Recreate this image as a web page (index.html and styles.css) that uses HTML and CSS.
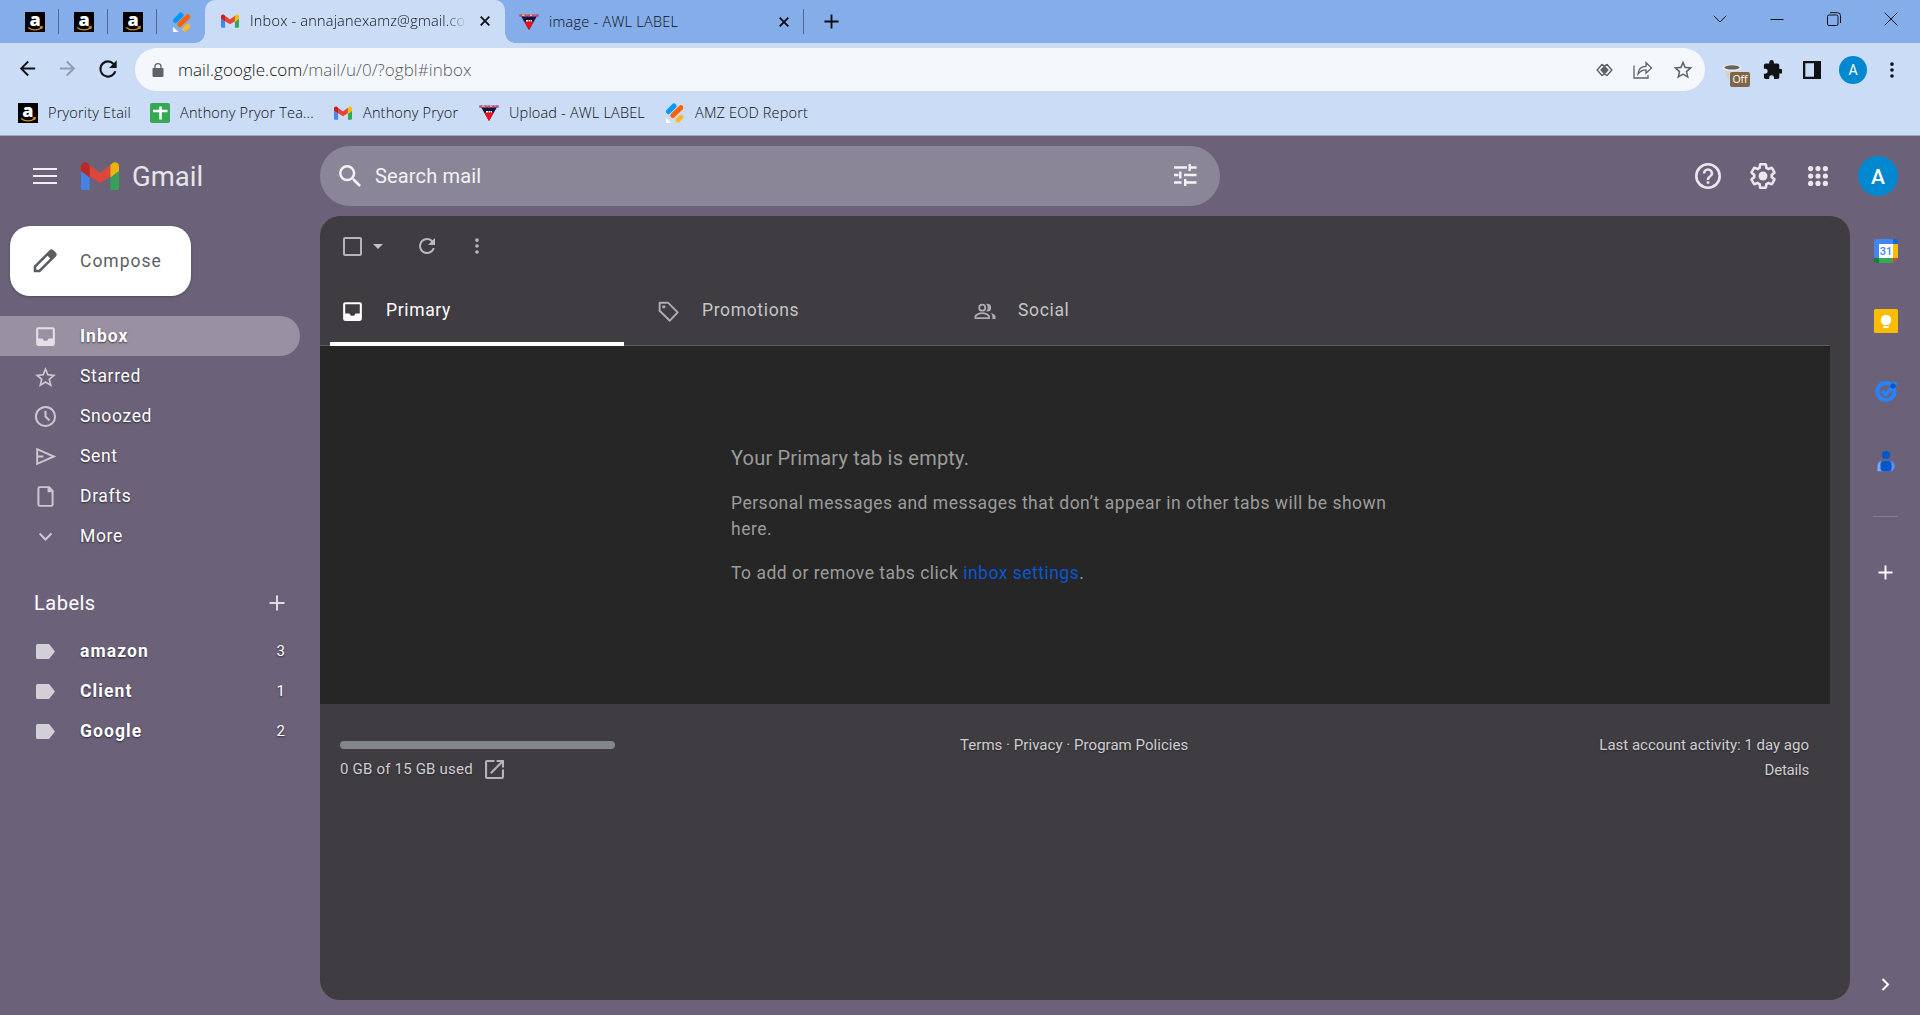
FILE: index.html
```html
<!DOCTYPE html>
<html lang="en">
<head>
  <meta charset="UTF-8">
  <meta name="viewport" content="width=device-width, initial-scale=1">
  <title>Inbox - Gmail</title>
  <link rel="stylesheet" href="styles.css">
</head>
<body>

  <!-- shared icons -->
  <svg class="sprite" width="0" height="0">
    <symbol id="smile" viewBox="0 0 20 20">
      <path d="M3 15.500c4 3.200 10 3.200 13.600.3M14.700 15l2.500-.2-.6 2.200" fill="none" stroke="#d98a1c" stroke-width="1.300"/>
    </symbol>
    <symbol id="jot" viewBox="0 0 20 20">
      <g stroke-linecap="round" stroke-width="5">
        <path d="M3.500 8.500l5.500-5.500" stroke="#0099ff"/>
        <path d="M7.800 12.500l8-7.800" stroke="#ff6100"/>
        <path d="M13 17l2.800-2.700" stroke="#ffb629"/>
      </g>
      <path d="M1 15l5.500 5H1z" fill="#fff"/>
    </symbol>
    <symbol id="gmail" viewBox="0 0 38 28">
      <path d="M0 9l8.600 6.500V28H2.600A2.600 2.600 0 0 1 0 25.400z" fill="#4285f4"/>
      <path d="M29.400 15.500L38 9v16.400a2.600 2.600 0 0 1-2.600 2.600h-6z" fill="#34a853"/>
      <path d="M8.600 3L19 10.800 29.400 3v11.500L19 21 8.600 14.500z" fill="#ea4335"/>
      <path d="M29.400 3l1.800-1.700C34-.8 38 .6 38 4.300V9l-8.600 6.500z" fill="#fbbc04"/>
      <path d="M8.600 3L6.800 1.300C4-.8 0 .6 0 4.300V9l8.600 6.500z" fill="#c5221f"/>
    </symbol>
    <symbol id="awl" viewBox="0 0 20 20">
      <path d="M2 4h16L10 18z" fill="#17123c"/>
      <path d="M5.200 9.500h9.600L10 18z" fill="#f40b12"/>
      <path d="M.3 3.500h19.400" stroke="#b3508a" stroke-width="2.400" stroke-dasharray="3.500 .5"/>
      <path d="M3 3.300h2.500M11 3.300h2" stroke="#f3c03a" stroke-width="1.600"/>
      <path d="M7 8.700h6" stroke="#fff" stroke-width="1.600" stroke-dasharray="2 .5"/>
    </symbol>
    <symbol id="sheet" viewBox="0 0 20 20">
      <rect width="20" height="20" rx="2" fill="#34a853"/>
      <path d="M10.500 3.500v13M3 8h14.500" stroke="#fff" stroke-width="2.600"/>
    </symbol>
    <symbol id="inbox" viewBox="0 0 24 24"><path d="M19 3H5a2 2 0 0 0-2 2v14a2 2 0 0 0 2 2h14a2 2 0 0 0 2-2V5a2 2 0 0 0-2-2zm0 11h-4l-1.500 2h-3L9 14H5V5h14z"/></symbol>
    <symbol id="star" viewBox="0 0 24 24"><path d="M22 9.240l-7.190-.62L12 2 9.190 8.630 2 9.240l5.460 4.730L5.820 21 12 17.270 18.180 21l-1.630-7.030L22 9.240zM12 15.400l-3.760 2.270 1-4.280-3.320-2.880 4.380-.38L12 6.100l1.710 4.040 4.380.38-3.320 2.880 1 4.280L12 15.400z"/></symbol>
    <symbol id="dots" viewBox="0 0 24 24"><circle cx="12" cy="5.500" r="2"/><circle cx="12" cy="12" r="2"/><circle cx="12" cy="18.500" r="2"/></symbol>
    <symbol id="refresh" viewBox="0 0 24 24"><path d="M17.650 6.350A7.950 7.950 0 0 0 12 4a8 8 0 1 0 7.730 10h-2.080A6 6 0 1 1 12 6c1.660 0 3.140.69 4.220 1.780L13 11h7V4z"/></symbol>
    <symbol id="plus" viewBox="0 0 16 16"><path d="M8 .5v15M.5 8h15" fill="none" stroke="currentColor" stroke-width="2"/></symbol>
    <symbol id="label" viewBox="0 0 19 15"><path d="M1.500 0H13l6 7.500-6 7.500H1.500A1.500 1.500 0 0 1 0 13.500v-12A1.500 1.500 0 0 1 1.500 0z"/></symbol>
    <symbol id="cross" viewBox="0 0 10 10"><path d="M.7.7l8.600 8.600M9.300.7L.7 9.300" fill="none" stroke="currentColor" stroke-width="1.800"/></symbol>
  </svg>

  <div class="tabstrip">
    <div class="pinned"><span class="fav amazon">a<svg><use href="#smile"/></svg></span></div>
    <div class="pinned"><span class="fav amazon">a<svg><use href="#smile"/></svg></span></div>
    <div class="pinned"><span class="fav amazon">a<svg><use href="#smile"/></svg></span></div>
    <div class="pinned last"><svg class="fav"><use href="#jot"/></svg></div>
    <div class="tab active">
      <svg class="fav mail"><use href="#gmail"/></svg>
      <span class="tab-title fading">Inbox - annajanexamz@gmail.co</span>
      <svg class="tab-close"><use href="#cross"/></svg>
    </div>
    <div class="tab">
      <svg class="fav"><use href="#awl"/></svg>
      <span class="tab-title">image - AWL LABEL</span>
      <svg class="tab-close"><use href="#cross"/></svg>
    </div>
    <svg class="new-tab"><use href="#plus"/></svg>
    <div class="window-btns">
      <svg width="14" height="8" viewBox="0 0 14 8"><path d="M.7.7L7 7 13.300.7"/></svg>
      <svg width="14" height="14" viewBox="0 0 14 14"><path d="M.5 7.500h13"/></svg>
      <svg width="14" height="14" viewBox="0 0 14 14"><rect x=".5" y="3" width="10.500" height="10.500" rx="1.500"/><path d="M3 .7h7.500a3 3 0 0 1 3 3V11"/></svg>
      <svg width="14" height="14" viewBox="0 0 14 14"><path d="M.6.6l12.800 12.800M13.400.6L.6 13.400"/></svg>
    </div>
  </div>

  <div class="toolbar">
    <div class="nav-btns">
      <svg viewBox="0 0 24 24"><path d="M20 11H7.830l5.590-5.590L12 4l-8 8 8 8 1.410-1.410L7.830 13H20z"/></svg>
      <svg class="dim" viewBox="0 0 24 24"><path d="M12 4l-1.410 1.410L16.170 11H4v2h12.170l-5.580 5.590L12 20l8-8z"/></svg>
      <svg class="reload" viewBox="0 0 24 24"><use href="#refresh"/></svg>
    </div>
    <div class="omnibox">
      <svg class="lock" viewBox="0 0 12 14"><path d="M10.500 5H9.700V3.700a3.700 3.700 0 0 0-7.400 0V5h-.8C.7 5 .5 5.500.5 6.200v6.600c0 .7.400 1.200 1 1.200h9c.6 0 1-.5 1-1.200V6.200c0-.7-.4-1.200-1-1.200zM3.600 5V3.700a2.400 2.400 0 0 1 4.800 0V5z"/></svg>
      <span class="url">mail.google.com<span class="path">/mail/u/0/?ogbl#inbox</span></span>
      <div class="omni-icons">
        <svg width="17" height="14" viewBox="0 0 18 14"><path d="M6.500 1L1.200 7l5.300 6M11.500 1l5.300 6-5.300 6M6.500 1L9 3.300 11.500 1M6.500 13L9 10.700l2.500 2.300" fill="none" stroke="currentColor" stroke-width="1.500"/><path d="M9 2.300L13.600 7 9 11.700 4.400 7z"/></svg>
        <svg width="20" height="18" viewBox="0 0 20 18"><path d="M1 4.500V17h14v-3M5 13c.4-5 3.500-7.600 8-7.600V1.600L18.500 7 13 12.300V8.800C9.500 8.800 7.200 10 5 13z" fill="none" stroke="currentColor" stroke-width="1.300"/></svg>
        <svg width="20" height="20" viewBox="1.500 1.500 21 21"><use href="#star" width="24" height="24"/></svg>
      </div>
    </div>
    <div class="ext">
      <div class="cup">
        <svg width="20" height="16" viewBox="0 0 20 16"><path d="M2.500 4h15l-1.700 11h-11z" fill="#d2d2d0"/><ellipse cx="10" cy="3.800" rx="9.700" ry="3.600" fill="#e9e9e7"/><ellipse cx="10" cy="3.400" rx="7.600" ry="2.100" fill="#66645f"/></svg>
        <span class="off">Off</span>
      </div>
      <svg class="puzzle" viewBox="1 1 21 21"><path d="M20.500 11H19V7a2 2 0 0 0-2-2h-4V3.500a2.500 2.500 0 0 0-5 0V5H4a2 2 0 0 0-2 2v3.800h1.500a2.700 2.700 0 0 1 0 5.400H2V20a2 2 0 0 0 2 2h3.800v-1.500a2.700 2.700 0 0 1 5.400 0V22H17a2 2 0 0 0 2-2v-4h1.500a2.500 2.500 0 0 0 0-5z"/></svg>
      <svg class="panel-icon" viewBox="0 0 18 18"><path d="M0 0h18v18H0zM2.300 2.300v13.400H11V2.300z" fill-rule="evenodd"/></svg>
      <span class="profile">A</span>
      <svg class="menu-dots"><use href="#dots"/></svg>
    </div>
  </div>

  <div class="bookmarks">
    <a class="bm b1"><span class="fav amazon">a<svg><use href="#smile"/></svg></span><span>Pryority Etail</span></a>
    <a class="bm b2"><svg class="fav"><use href="#sheet"/></svg><span>Anthony Pryor Tea...</span></a>
    <a class="bm b3"><svg class="fav mail"><use href="#gmail"/></svg><span>Anthony Pryor</span></a>
    <a class="bm b4"><svg class="fav"><use href="#awl"/></svg><span>Upload - AWL LABEL</span></a>
    <a class="bm b5"><svg class="fav"><use href="#jot"/></svg><span>AMZ EOD Report</span></a>
  </div>

  <div class="gmail">
    <header class="header">
      <div class="brand">
        <div class="hamburger"><i></i><i></i><i></i></div>
        <svg class="logo"><use href="#gmail"/></svg>
        <span class="logo-text">Gmail</span>
      </div>
      <div class="search">
        <svg class="search-icon" viewBox="3 3 17.500 17.500"><path d="M15.500 14h-.79l-.28-.27A6.470 6.470 0 0 0 16 9.500 6.500 6.500 0 1 0 9.500 16c1.610 0 3.090-.59 4.230-1.570l.27.28v.79l5 4.990L20.490 19l-4.990-5zm-6 0a4.500 4.500 0 1 1 0-9 4.500 4.500 0 0 1 0 9z"/></svg>
        <span class="search-text">Search mail</span>
        <svg class="tune" viewBox="0 0 24 24"><path d="M1 4.500h13M16.700 1v7M17 4.500h6.500M1 12h4.500M7.300 8.500v7M11 12h12.500M1 19.500h7.500M12.200 16v7M12 19.500h11.500" fill="none" stroke="currentColor" stroke-width="2.400"/></svg>
      </div>
      <div class="header-icons">
        <svg width="26" height="26" viewBox="2 2 20 20"><path d="M11 18h2v-2h-2v2zm1-16a10 10 0 1 0 0 20 10 10 0 0 0 0-20zm0 18a8 8 0 1 1 0-16 8 8 0 0 1 0 16zm0-14a4 4 0 0 0-4 4h2a2 2 0 1 1 4 0c0 2-3 1.750-3 5h2c0-2.250 3-2.500 3-5a4 4 0 0 0-4-4z"/></svg>
        <svg width="26" height="26" viewBox="1.750 1.750 20.500 20.500"><path d="M13.850 22.250h-3.700c-.74 0-1.360-.54-1.450-1.270l-.27-1.890c-.27-.14-.53-.29-.79-.46l-1.800.72c-.7.260-1.470-.03-1.810-.65L2.200 15.530c-.35-.66-.2-1.440.36-1.880l1.530-1.190c-.01-.15-.02-.3-.02-.46 0-.15.010-.31.020-.46l-1.520-1.190c-.59-.45-.74-1.260-.37-1.880l1.850-3.190c.34-.62 1.110-.9 1.790-.63l1.810.73c.26-.17.520-.32.780-.46l.27-1.910c.09-.7.710-1.250 1.440-1.250h3.700c.74 0 1.360.54 1.450 1.270l.27 1.890c.27.140.53.290.79.460l1.800-.72c.71-.26 1.480.03 1.820.65l1.840 3.180c.36.660.2 1.440-.36 1.880l-1.520 1.190c.01.150.02.300.02.460s-.01.310-.02.460l1.520 1.190c.56.450.72 1.230.37 1.860l-1.860 3.220c-.34.620-1.110.9-1.800.63l-1.800-.72c-.26.170-.52.320-.78.460l-.27 1.910c-.1.680-.72 1.220-1.460 1.220zm-3.230-2h2.760l.37-2.550.53-.22c.44-.18.880-.44 1.340-.78l.45-.34 2.380.96 1.380-2.400-2.030-1.580.07-.56c.03-.26.060-.51.060-.78s-.03-.53-.06-.78l-.07-.56 2.030-1.580-1.390-2.400-2.390.96-.45-.35c-.42-.32-.87-.58-1.330-.77l-.52-.22-.37-2.550h-2.760l-.37 2.550-.53.210c-.44.190-.88.440-1.340.79l-.45.330-2.380-.95-1.390 2.390 2.030 1.580-.07.560a7 7 0 0 0-.06.790c0 .26.020.53.060.78l.07.560-2.030 1.580 1.380 2.400 2.390-.96.450.350c.43.330.86.580 1.330.77l.53.220z"/><circle cx="12" cy="12" r="3.500"/></svg>
        <svg width="20" height="20" viewBox="0 0 20 20"><circle cx="2.600" cy="2.600" r="2.600"/><circle cx="10" cy="2.600" r="2.600"/><circle cx="17.400" cy="2.600" r="2.600"/><circle cx="2.600" cy="10" r="2.600"/><circle cx="10" cy="10" r="2.600"/><circle cx="17.400" cy="10" r="2.600"/><circle cx="2.600" cy="17.400" r="2.600"/><circle cx="10" cy="17.400" r="2.600"/><circle cx="17.400" cy="17.400" r="2.600"/></svg>
        <span class="avatar">A</span>
      </div>
    </header>

    <div class="body">
      <nav class="sidebar">
        <button class="compose">
          <svg width="24" height="24" viewBox="0 0 24 24"><path d="M20.400 1.200a2.800 2.800 0 0 0-3.900 0L.7 17v6.300H7L22.800 7.500a2.800 2.800 0 0 0 0-3.900zM5.900 20.700H3.300v-2.600L14.600 6.800l2.600 2.600z"/></svg>
          <span>Compose</span>
        </button>
        <ul class="folders">
          <li class="current"><svg class="ic"><use href="#inbox"/></svg><span>Inbox</span></li>
          <li><svg class="ic low"><use href="#star"/></svg><span>Starred</span></li>
          <li><svg class="ic" viewBox="0 0 24 24"><path d="M12 2.800a9.200 9.200 0 1 0 0 18.400 9.200 9.200 0 0 0 0-18.400zM12 6.500V12l3.800 3.800" fill="none" stroke="currentColor" stroke-width="1.900"/></svg><span>Snoozed</span></li>
          <li><svg class="ic" viewBox="0 0 24 24"><path d="M4 5v14L20 12zM4 12h6" fill="none" stroke="currentColor" stroke-width="1.900"/></svg><span>Sent</span></li>
          <li><svg class="ic" viewBox="0 0 24 24"><path d="M15.500 3H6.500A1.300 1.300 0 0 0 5.200 4.300v15.400A1.300 1.300 0 0 0 6.500 21h11a1.300 1.300 0 0 0 1.300-1.300V6.500z" fill="none" stroke="currentColor" stroke-width="1.900"/><path d="M14 2.500V8h5.500z"/></svg><span>Drafts</span></li>
          <li><svg class="ic" viewBox="0 0 24 24"><path d="M6.300 9.200l5.700 5.600 5.700-5.600" fill="none" stroke="currentColor" stroke-width="2"/></svg><span>More</span></li>
        </ul>
        <div class="labels-head">
          <span>Labels</span>
          <svg class="add"><use href="#plus"/></svg>
        </div>
        <ul class="folders labels">
          <li><svg class="tag"><use href="#label"/></svg><span>amazon</span><em>3</em></li>
          <li><svg class="tag"><use href="#label"/></svg><span>Client</span><em>1</em></li>
          <li><svg class="tag"><use href="#label"/></svg><span>Google</span><em>2</em></li>
        </ul>
      </nav>

      <main class="panel">
        <div class="actions">
          <span class="checkbox"></span>
          <span class="caret"></span>
          <svg class="act-refresh"><use href="#refresh"/></svg>
          <svg class="act-more"><use href="#dots"/></svg>
        </div>
        <div class="cats">
          <div class="cat selected"><svg><use href="#inbox"/></svg><span>Primary</span></div>
          <div class="cat promo"><svg viewBox="0 0 24 24"><path d="M3.500 3.500h8l9.300 9.300-7.500 8-9.800-9.500z" fill="none" stroke="currentColor" stroke-width="1.900" stroke-linejoin="round"/><circle cx="7.500" cy="7.500" r="1.600"/></svg><span>Promotions</span></div>
          <div class="cat social"><svg viewBox="0 0 24 24"><path d="M9 4.500a3.300 3.300 0 1 0 0 6.600 3.300 3.300 0 0 0 0-6.600zM1.500 19.200v-1.500c0-2.600 5-3.900 7.500-3.900s7.500 1.300 7.500 3.900v1.500z" fill="none" stroke="currentColor" stroke-width="2"/><path d="M14.500 12a4.200 4.200 0 0 0 0-8.400c-.4 0-.8.1-1.200.2a6 6 0 0 1 0 8c.4.1.8.2 1.200.2zM18 13.500c1.200 1 2 2.300 2 4v2.700h3.500v-2.700c0-2.200-3-3.500-5.500-4z"/></svg><span>Social</span></div>
        </div>
        <div class="empty">
          <div class="empty-text">
            <h2>Your Primary tab is empty.</h2>
            <p class="msg">Personal messages and messages that don’t appear in other tabs will be shown<br>here.</p>
            <p class="hint">To add or remove tabs click <a>inbox settings</a>.</p>
          </div>
        </div>
        <footer class="footer">
          <div class="storage">
            <div class="bar"></div>
            <div class="used"><span>0 GB of 15 GB used</span>
              <svg width="19" height="19" viewBox="3 3 18 18"><path d="M19 19H5V5h7V3H5a2 2 0 0 0-2 2v14a2 2 0 0 0 2 2h14a2 2 0 0 0 2-2v-7h-2v7zM14 3v2h3.590l-9.830 9.830 1.410 1.410L19 6.410V10h2V3h-7z"/></svg>
            </div>
          </div>
          <div class="policies">Terms · Privacy · Program Policies</div>
          <div class="activity"><span>Last account activity: 1 day ago</span><br><span class="details">Details</span></div>
        </footer>
      </main>

      <aside class="rail">
        <svg width="24" height="24" viewBox="0 0 24 24"><path d="M2 0h17v5H5v14H0V2a2 2 0 0 1 2-2z" fill="#4285f4"/><path d="M19 0h3a2 2 0 0 1 2 2v3h-5z" fill="#1967d2"/><path d="M19 5h5v14h-5z" fill="#fbbc04"/><path d="M5 19h14v5H5z" fill="#34a853"/><path d="M0 19h5v5H2a2 2 0 0 1-2-2z" fill="#188038"/><path d="M19 19h5l-5 5z" fill="#ea4335"/><path d="M5 5h14v14H5z" fill="#fff"/><text x="12" y="16" text-anchor="middle" font-family="Roboto, sans-serif" font-weight="500" font-size="11" fill="#4285f4">31</text></svg>
        <svg width="24" height="24" viewBox="0 0 24 24"><rect width="24" height="24" rx="1.500" fill="#fbbc04"/><circle cx="12" cy="11" r="5.200" fill="#fff"/><path d="M9.500 14h5v2h-5zM9.500 17h5v2h-5z" fill="#fff"/></svg>
        <svg width="24" height="24" viewBox="0 0 24 24"><circle cx="12" cy="12.500" r="8.600" fill="none" stroke="#2684fc" stroke-width="4"/><path d="M8.300 11.800l3.500 3.500L20 7.200" fill="none" stroke="#2684fc" stroke-width="4"/><path d="M19 7l3.500-3.500" stroke="#2684fc" stroke-width="3.600"/><circle cx="19" cy="7" r="2.600" fill="#0057cc"/></svg>
        <svg width="24" height="24" viewBox="0 0 24 24"><path d="M3.500 22.300v-5.600a4.700 4.700 0 0 1 4.700-4.700H12v10.300z" fill="#7baaf7"/><path d="M12 12h4a4.700 4.700 0 0 1 4.700 4.700v.9a4.700 4.700 0 0 1-4.700 4.700h-4z" fill="#5b91f5"/><rect x="6.500" y="12" width="11" height="10.300" rx="3" fill="#0057cc"/><circle cx="12" cy="6" r="4.100" fill="#0057cc"/></svg>
        <hr>
        <svg class="rail-plus"><use href="#plus"/></svg>
        <svg class="rail-toggle" width="9" height="13" viewBox="0 0 9 13"><path d="M1.500 1l5.500 5.500L1.500 12" fill="none" stroke="currentColor" stroke-width="2"/></svg>
      </aside>
    </div>
  </div>

</body>
</html>
```

FILE: styles.css
```css
* {
  box-sizing: border-box;
}

body {
  margin: 0;
  width: 1920px;
  height: 1015px;
  overflow: hidden;
  display: flex;
  flex-direction: column;
  font-family: Roboto, sans-serif;
  background: #6b627a;
}

svg {
  fill: currentColor;
  flex: none;
  display: block;
}

.sprite {
  position: absolute;
}

/* Browser tabs */
.tabstrip {
  height: 43px;
  background: #84ade9;
  display: flex;
  align-items: center;
  padding-left: 10px;
  font-family: "Open Sans", sans-serif;
  font-size: 14.5px;
  font-weight: 300;
  color: #0c0e12;
}

.fav {
  width: 20px;
  height: 20px;
}

.fav.mail {
  width: 18px;
  height: 14px;
}

.amazon {
  flex: none;
  background: #000;
  color: #fff;
  font-size: 18px;
  font-weight: 800;
  line-height: 14px;
  text-align: center;
  position: relative;
}

.amazon svg {
  position: absolute;
  left: 0;
  top: 0;
  width: 20px;
  height: 20px;
}

.pinned {
  width: 49px;
  height: 25px;
  padding-left: 15px;
  border-right: 1px solid #4f6a93;
  display: flex;
  align-items: center;
}

.pinned.last {
  width: 48px;
  border: none;
}

.tab {
  width: 299px;
  height: 25px;
  display: flex;
  align-items: center;
  padding-left: 14px;
  border-right: 1px solid #4f6a93;
}

.tab.active {
  width: 300px;
  height: 43px;
  background: #cbdcf7;
  border: none;
  border-radius: 10px 10px 0 0;
  padding: 0 0 1px 16px;
  position: relative;
}

.tab.active::before,
.tab.active::after {
  content: "";
  position: absolute;
  bottom: 0;
  width: 10px;
  height: 10px;
}

.tab.active::before {
  left: -10px;
  background: radial-gradient(circle at 0 0, transparent 9.5px, #cbdcf7 10px);
}

.tab.active::after {
  right: -10px;
  background: radial-gradient(circle at 100% 0, transparent 9.5px, #cbdcf7 10px);
}

.tab-title {
  margin-left: 10px;
  padding-bottom: 1px;
  width: 220px;
  letter-spacing: .25px;
  white-space: nowrap;
}

.tab-title.fading {
  margin-left: 11px;
  letter-spacing: .2px;
  -webkit-mask-image: linear-gradient(to right, #000 195px, transparent 217px);
  mask-image: linear-gradient(to right, #000 195px, transparent 217px);
}

.tab-close {
  width: 10px;
  height: 10px;
  margin-left: 10px;
}

.new-tab {
  width: 15px;
  height: 15px;
  margin-left: 20px;
}

.window-btns {
  margin: 0 22px 6px auto;
  display: flex;
  align-items: center;
  gap: 43px;
  color: #101418;
}

.window-btns svg {
  fill: none;
  stroke: currentColor;
  stroke-width: 1;
}

/* Address bar */
.toolbar {
  height: 53px;
  background: #cbdcf7;
  display: flex;
  align-items: center;
  color: #101216;
  font-family: "Open Sans", sans-serif;
}

.nav-btns {
  width: 135px;
  padding-left: 16px;
  display: flex;
  gap: 17px;
}

.nav-btns svg {
  width: 23px;
  height: 23px;
}

.nav-btns .dim {
  color: #8e9bb0;
}

.nav-btns .reload {
  width: 26px;
  height: 26px;
  margin: -1px 0 0 -1px;
}

.omnibox {
  width: 1570px;
  height: 43px;
  border-radius: 22px;
  background: #f4f7fc;
  display: flex;
  align-items: center;
}

.lock {
  width: 12px;
  height: 14px;
  margin-left: 17px;
  color: #5f6368;
}

.url {
  margin-left: 14px;
  font-size: 17px;
  font-weight: 300;
  letter-spacing: .05px;
}

.path {
  color: #55595e;
}

.omni-icons {
  margin: 0 12px 0 auto;
  display: flex;
  align-items: center;
  gap: 20px;
  color: #5f6368;
}

.ext {
  display: flex;
  align-items: center;
}

.cup {
  width: 30px;
  height: 26px;
  margin-left: 17px;
  padding-top: 7px;
  position: relative;
}

.off {
  position: absolute;
  left: 8px;
  top: 15px;
  width: 20px;
  height: 15px;
  border-radius: 2px;
  background: #7f6646;
  color: #fff;
  font-size: 10.5px;
  line-height: 15px;
  text-align: center;
}

.puzzle {
  width: 19px;
  height: 19px;
  margin-left: 11px;
}

.panel-icon {
  width: 18px;
  height: 18px;
  margin-left: 21px;
}

.profile {
  width: 28px;
  height: 28px;
  margin-left: 18px;
  border-radius: 50%;
  background: #0288d1;
  color: #fff;
  font: 14px/28px Roboto, sans-serif;
  text-align: center;
}

.menu-dots {
  width: 22px;
  height: 22px;
  margin-left: 14px;
}

/* Bookmarks */
.bookmarks {
  height: 40px;
  background: #cbdcf7;
  border-bottom: 1px solid #9aa9c2;
  display: flex;
  padding: 0 0 5px 18px;
  font-family: "Open Sans", sans-serif;
  font-size: 14.5px;
  font-weight: 300;
  letter-spacing: .17px;
  color: #0c0e12;
}

.bm {
  display: flex;
  align-items: center;
  gap: 10px;
  white-space: nowrap;
}

.bm > span:last-child {
  padding-bottom: 1px;
}

.b1 { width: 132px; }
.b2 { width: 184px; }
.b3 { width: 145px; gap: 11px; }
.b4 { width: 186px; }

/* Gmail header */
.gmail {
  flex: 1;
  color: #fff;
}

.header {
  height: 80px;
  display: flex;
  align-items: center;
}

.brand {
  width: 320px;
  padding-left: 33px;
  display: flex;
  align-items: center;
}

.hamburger {
  width: 24px;
  height: 16px;
  display: flex;
  flex-direction: column;
  justify-content: space-between;
}

.hamburger i {
  height: 2px;
  background: #f0eff2;
}

.logo {
  width: 38px;
  height: 28px;
  margin-left: 24px;
  opacity: .9;
}

.logo-text {
  margin: 1px 0 0 13px;
  font-size: 27.5px;
  color: #e6e4e9;
}

.search {
  width: 900px;
  height: 60px;
  border-radius: 30px;
  background: #8b8697;
  display: flex;
  align-items: center;
  color: #f3f2f4;
}

.search-icon {
  width: 22px;
  height: 22px;
  margin-left: 19px;
}

.search-text {
  margin-left: 14px;
  font-size: 20px;
  letter-spacing: .15px;
}

.tune {
  width: 24px;
  height: 24px;
  margin: 0 23px 2px auto;
}

.header-icons {
  margin: 0 22px 0 auto;
  display: flex;
  align-items: center;
  color: #eae8ec;
}

.header-icons svg + svg {
  margin-left: 29px;
}

.header-icons svg:nth-child(3) {
  margin-left: 32px;
}

.avatar {
  width: 40px;
  height: 40px;
  margin-left: 30px;
  border-radius: 50%;
  background: #0288d1;
  color: #fff;
  font-size: 21px;
  font-weight: 500;
  line-height: 42px;
  text-align: center;
}

.body {
  display: flex;
  height: 799px;
}

/* Sidebar */
.sidebar {
  width: 320px;
  padding-top: 10px;
}

.compose {
  width: 181px;
  height: 70px;
  margin-left: 10px;
  padding: 0 0 0 23px;
  border: none;
  border-radius: 20px;
  background: #fff;
  box-shadow: 0 1px 3px rgba(0, 0, 0, .25);
  display: flex;
  align-items: center;
  gap: 23px;
  font-family: Roboto, sans-serif;
  font-size: 17.5px;
  letter-spacing: 1px;
  color: #5a5e63;
}

.folders {
  list-style: none;
  margin: 20px 0 0;
  padding: 0;
  font-size: 17.5px;
  letter-spacing: .65px;
  text-shadow: 0 1px 2px rgba(0, 0, 0, .6);
}

.folders li {
  width: 300px;
  height: 40px;
  padding-left: 33px;
  border-radius: 0 20px 20px 0;
  display: flex;
  align-items: center;
}

.folders li.current {
  background: #9990a2;
  font-weight: 700;
  letter-spacing: 1px;
}

.ic {
  width: 25px;
  height: 25px;
  margin-right: 22px;
  color: #cbc8d0;
}

.ic.low {
  margin-top: 2px;
}

.folders .current .ic {
  color: #e2dfe6;
}

.labels-head {
  height: 54px;
  margin-top: 20px;
  padding: 0 35px 0 34px;
  display: flex;
  align-items: center;
  justify-content: space-between;
  font-size: 20px;
  letter-spacing: .5px;
}

.add {
  width: 16px;
  height: 16px;
  color: #e0dee3;
}

.folders.labels {
  margin-top: 1px;
  font-weight: 700;
  letter-spacing: 1.1px;
}

.tag {
  width: 19px;
  height: 15px;
  margin: 0 25px 0 3px;
  color: #d2cfd7;
}

.folders em {
  margin: 0 15px 0 auto;
  font-size: 15px;
  font-style: normal;
  font-weight: 400;
  letter-spacing: 0;
}

/* Mail panel */
.panel {
  flex: none;
  width: 1530px;
  height: 784px;
  border-radius: 20px;
  background: #3f3d42;
  overflow: hidden;
}

.actions {
  height: 60px;
  padding-left: 23px;
  display: flex;
  align-items: center;
  color: #b9b8bb;
}

.checkbox {
  width: 19px;
  height: 19px;
  border: 2px solid #b6b5b8;
  border-radius: 2px;
}

.caret {
  margin-left: 11px;
  border: 5px solid transparent;
  border-top-color: #c3c2c5;
  border-bottom: none;
}

.act-refresh {
  width: 24px;
  height: 24px;
  margin-left: 32px;
}

.act-more {
  width: 24px;
  height: 22px;
  margin-left: 26px;
}

.cats {
  width: 1510px;
  height: 70px;
  border-bottom: 1px solid #5c5b60;
  padding-left: 10px;
  display: flex;
}

.cat {
  width: 294px;
  height: 70px;
  margin-right: 22px;
  padding: 0 0 5px 10px;
  display: flex;
  align-items: center;
  font-size: 17.5px;
  letter-spacing: .65px;
  color: #c6c5c7;
}

.cat.selected {
  color: #fff;
  background: linear-gradient(#fff, #fff) bottom / 100% 4px no-repeat;
}

.cat span {
  padding-top: 2px;
}

.cat svg {
  width: 25px;
  height: 25px;
  margin: 6px 21px 0 0;
  color: #aeadb0;
}

.cat.selected svg {
  color: #fff;
}

.cat.social svg {
  width: 22px;
  margin: 6px 22px 0 2px;
}

.empty {
  width: 1510px;
  height: 358px;
  background: #262626;
  padding: 100px 0 0 411px;
  color: #9c9c9c;
}

.empty h2 {
  margin: 0;
  font-size: 20px;
  font-weight: 400;
  letter-spacing: .2px;
  line-height: 25px;
}

.empty p {
  margin: 0;
  font-size: 17.5px;
  letter-spacing: .49px;
  line-height: 26px;
  white-space: nowrap;
}

.empty .msg {
  margin-top: 19px;
}

.empty .hint {
  margin-top: 18px;
}

.empty a {
  color: #0b57d0;
}

.footer {
  display: flex;
  width: 1489px;
  padding: 29px 0 0 20px;
  font-size: 15px;
  line-height: 25px;
  color: #cfced0;
  text-shadow: 0 1px 2px rgba(0, 0, 0, .4);
}

.storage {
  width: 275px;
}

.bar {
  height: 8px;
  margin: 8px 0;
  border-radius: 4px;
  background: #82858c;
}

.used {
  display: flex;
  align-items: center;
  letter-spacing: .2px;
}

.used svg {
  margin-left: 12px;
  color: #b5b4b8;
}

.policies {
  margin-left: 345px;
  letter-spacing: .04px;
}

.activity {
  margin-left: auto;
  text-align: right;
}

.details {
  letter-spacing: -.2px;
}

/* Right rail */
.rail {
  width: 70px;
  display: flex;
  flex-direction: column;
  align-items: center;
  gap: 46px;
  padding: 23px 0 0 1px;
}

.rail hr {
  width: 25px;
  height: 1px;
  margin: -3px 0 0;
  border: none;
  background: #847c92;
}

.rail-plus {
  width: 15px;
  height: 15px;
  margin-top: 2px;
}

.rail-toggle {
  margin: auto 0 24px;
}
```
